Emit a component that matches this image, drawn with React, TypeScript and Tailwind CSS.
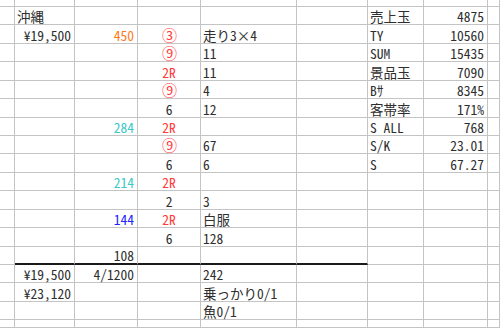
import React from "react";

type Cell = { t: string; c?: string; a?: "l" | "r" | "c"; big?: boolean };

const FONT = '"Noto Sans Mono CJK JP", "Noto Sans CJK JP", monospace';

const widths = [
  "w-[15px]",
  "w-[60px]",
  "w-[63px]",
  "w-[63px]",
  "w-[96px]",
  "w-[71px]",
  "w-[56px]",
  "w-[64px]",
  "flex-1",
];

const heights = [
  "h-[7px]",
  "h-[18px]",
  "h-[19px]",
  "h-[18px]",
  "h-[19px]",
  "h-[18px]",
  "h-[19px]",
  "h-[18px]",
  "h-[18px]",
  "h-[19px]",
  "h-[18px]",
  "h-[19px]",
  "h-[18px]",
  "h-[19px]",
  "h-[18px]",
  "h-[18px]",
  "h-[19px]",
  "h-[18px]",
  "h-[8px]",
];

const RED = "text-[#ff3838]";
const BLK = "text-[#2e2e2e]";

const rows: Record<number, (Cell | null)[]> = {
  1: [null, { t: "沖縄", a: "l" }, null, null, null, null, { t: "売上玉", a: "l" }, { t: "4875", a: "r" }],
  2: [null, { t: "¥19,500", a: "r" }, { t: "450", a: "r", c: "text-[#ff7a1e]" }, { t: "③", a: "c", c: RED, big: true }, { t: "走り3×4", a: "l" }, null, { t: "TY", a: "l" }, { t: "10560", a: "r" }],
  3: [null, null, null, { t: "⑨", a: "c", c: RED, big: true }, { t: "11", a: "l" }, null, { t: "SUM", a: "l" }, { t: "15435", a: "r" }],
  4: [null, null, null, { t: "2R", a: "c", c: RED }, { t: "11", a: "l" }, null, { t: "景品玉", a: "l" }, { t: "7090", a: "r" }],
  5: [null, null, null, { t: "⑨", a: "c", c: RED, big: true }, { t: "4", a: "l" }, null, { t: "Bｻ", a: "l" }, { t: "8345", a: "r" }],
  6: [null, null, null, { t: "6", a: "c" }, { t: "12", a: "l" }, null, { t: "客帯率", a: "l" }, { t: "171%", a: "r" }],
  7: [null, null, { t: "284", a: "r", c: "text-[#3cc8c8]" }, { t: "2R", a: "c", c: RED }, null, null, { t: "S ALL", a: "l" }, { t: "768", a: "r" }],
  8: [null, null, null, { t: "⑨", a: "c", c: RED, big: true }, { t: "67", a: "l" }, null, { t: "S/K", a: "l" }, { t: "23.01", a: "r" }],
  9: [null, null, null, { t: "6", a: "c" }, { t: "6", a: "l" }, null, { t: "S", a: "l" }, { t: "67.27", a: "r" }],
  10: [null, null, { t: "214", a: "r", c: "text-[#3cc8c8]" }, { t: "2R", a: "c", c: RED }],
  11: [null, null, null, { t: "2", a: "c" }, { t: "3", a: "l" }],
  12: [null, null, { t: "144", a: "r", c: "text-[#2323ff]" }, { t: "2R", a: "c", c: RED }, { t: "白服", a: "l" }],
  13: [null, null, null, { t: "6", a: "c" }, { t: "128", a: "l" }],
  14: [null, null, { t: "108", a: "r" }],
  15: [null, { t: "¥19,500", a: "r" }, { t: "4/1200", a: "r" }, null, { t: "242", a: "l" }],
  16: [null, { t: "¥23,120", a: "r" }, null, null, { t: "乗っかり0/1", a: "l" }],
  17: [null, null, null, null, { t: "魚0/1", a: "l" }],
};

export default function App() {
  return (
    <div
      className="w-[500px] h-[328px] overflow-hidden bg-white text-[13.5px] flex flex-col"
      style={{ fontFamily: FONT }}
    >
      {heights.map((h, ri) => {
        const data = rows[ri] || [];
        return (
          <div key={ri} className={`flex shrink-0 ${h}`}>
            {widths.map((w, ci) => {
              const cell = data[ci] || null;
              const thick = ri === 14 && ci >= 1 && ci <= 5;
              const bottom = thick
                ? "border-b-2 border-b-[#1a1a1a]"
                : "border-b border-b-[#c4c4c4]";
              const align =
                cell?.a === "r"
                  ? "justify-end pr-[3px]"
                  : cell?.a === "c"
                  ? "justify-center"
                  : "justify-start pl-[2px]";
              return (
                <div
                  key={ci}
                  className={`${w} shrink-0 h-full border-r border-r-[#c4c4c4] ${bottom} flex ${
                    cell?.big ? "items-center" : "items-end"
                  } ${align} whitespace-nowrap overflow-visible`}
                >
                  {cell && (
                    <span
                      className={`${
                        cell.big ? "text-[15px] leading-[15px] pl-[1px]" : "leading-[16px]"
                      } ${cell.c || BLK}`}
                    >
                      {cell.t}
                    </span>
                  )}
                </div>
              );
            })}
          </div>
        );
      })}
    </div>
  );
}
